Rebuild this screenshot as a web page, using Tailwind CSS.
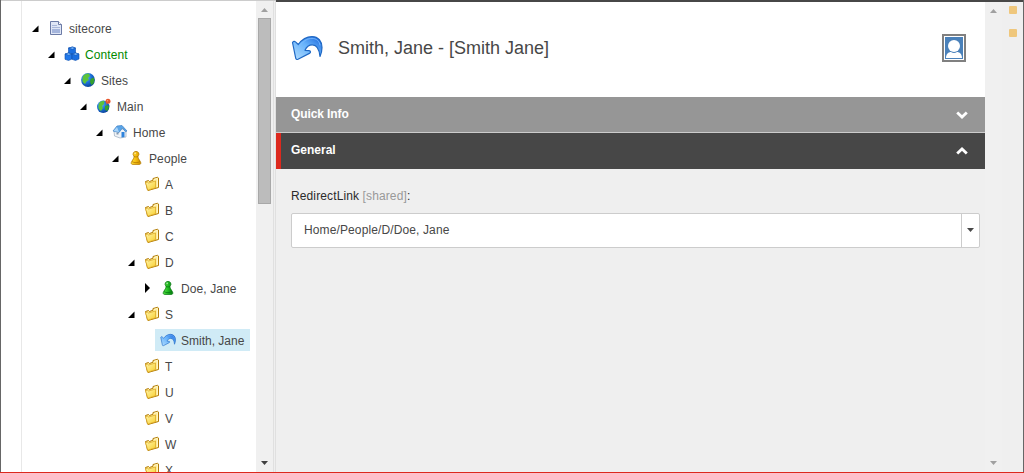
<!DOCTYPE html>
<html lang="en">
<head>
<meta charset="utf-8">
<title>Content Editor</title>
<script src="https://cdn.jsdelivr.net/npm/@tailwindcss/browser@4"></script>
</head>
<body class="h-[473px] w-[1024px] overflow-hidden bg-[#efefef] font-['Liberation_Sans',Arial,sans-serif] text-[12px] text-[#474747]">
<svg class="absolute size-0">
  <defs>
    <linearGradient id="gold" x1="0" y1="0" x2="1" y2="1"><stop offset="0" stop-color="#fff6b0"/><stop offset="1" stop-color="#f8cf2c"/></linearGradient>
    <linearGradient id="pawnY" x1="0" x2="1"><stop offset="0" stop-color="#ffe23c"/><stop offset=".5" stop-color="#f5bd10"/><stop offset="1" stop-color="#c98a00"/></linearGradient>
    <linearGradient id="pawnG" x1="0" x2="1"><stop offset="0" stop-color="#5fe84a"/><stop offset=".5" stop-color="#22bb22"/><stop offset="1" stop-color="#067a10"/></linearGradient>
    <linearGradient id="undo" x1="1" y1="0" x2="0" y2="1"><stop offset="0" stop-color="#1560d8"/><stop offset=".45" stop-color="#66b2fb"/><stop offset="1" stop-color="#b4defe"/></linearGradient>
    <radialGradient id="sea" cx=".35" cy=".3" r=".8"><stop offset="0" stop-color="#69b8ff"/><stop offset=".5" stop-color="#1b6fd8"/><stop offset="1" stop-color="#083a8c"/></radialGradient>
  </defs>
  <symbol id="open" viewBox="0 0 16 16"><path d="M6.500 5.500V12H0z" fill="#000"/></symbol>
  <symbol id="closed" viewBox="0 0 16 16"><path d="M1 3l5 5-5 5z" fill="#000"/></symbol>
  <symbol id="doc" viewBox="0 0 16 16"><path d="M2.500 1.500h8l3 3v10h-11z" fill="#dfe6f6" stroke="#6c7ba6"/><path d="M10.500 1.500v3h3" fill="#fff" stroke="#6c7ba6"/><path d="M4 5.500h5M4 7.500h8" stroke="#a9b7da"/><path d="M4 9h8v4H4z" fill="#a5b5dc"/></symbol>
  <symbol id="cubes" viewBox="0 0 16 16"><g stroke="#0b4fb0" stroke-width=".6"><path d="M4.500 2l4-1 3 1v5l-3 1.500-4-1z" fill="#1b6fe0"/><path d="M4.500 2l4-1 3 1-3 1.300z" fill="#78baff"/><path d="M1 8l3.500-1L8 8v5l-3.500 1.500L1 13.300z" fill="#2279ea"/><path d="M1 8l3.500-1L8 8l-3.200 1.200z" fill="#8bc6ff"/><path d="M8 8l3.500-1L15 8v5l-3.500 1.500L8 13.300z" fill="#1b6fe0"/><path d="M8 8l3.500-1L15 8l-3.200 1.200z" fill="#8bc6ff"/></g></symbol>
  <symbol id="globe" viewBox="0 0 16 16"><circle cx="8" cy="8" r="6.900" fill="url(#sea)"/><path d="M3 4c2-2.500 5-3 6-2.300L10 4 8 6l1 2-2 1-2 3C3 11 2 9 2.500 7z" fill="#5cc33c"/><path d="M10.500 7l3-1.500 1 2.500-1 3.500-2 1.500-1.500-3z" fill="#35a12e"/></symbol>
  <symbol id="main" viewBox="0 0 16 16"><circle cx="7.200" cy="8.800" r="6.200" fill="url(#sea)"/><path d="M3 5.500c1-2 4-3 5.500-2.500L8 6 6 8l1 2-2 3C3 12 2 10 2.500 8z" fill="#5cc33c"/><path d="M9 8l3-1 1 2-1.500 4L9 12z" fill="#35a12e"/><path d="M10 7l2-4" stroke="#777"/><circle cx="12" cy="3.300" r="2.500" fill="#e8552b"/><circle cx="11.500" cy="2.700" r=".8" fill="#ff9d77"/></symbol>
  <symbol id="home" viewBox="0 0 16 16"><path d="M2 7l3-4 8 3 1 1v6l-6 1-5.500-2z" fill="#f0f3f7" stroke="#9aaabd" stroke-width=".7"/><path d="M1 7l4-5 5-.500L15 7l-1.500.800L10.500 4 7 8.500z" fill="#5ba5e8" stroke="#3c80c4" stroke-width=".7"/><path d="M1.500 7L5 3l2 5z" fill="#a9d4f8"/><path d="M9.500 8h3v5l-3 .500z" fill="#2e83dc"/><path d="M4.500 8.500h2v2h-2z" fill="#8498ad"/></symbol>
  <symbol id="pawn" viewBox="0 0 16 16"><path d="M8 1.400a2.700 2.700 0 0 1 2 4.700c-.2 2 .8 3 2.300 5.400.9 1.500.6 2.900-1 2.900H4.700c-1.600 0-1.900-1.400-1-2.900C5.200 9.100 6.200 8.100 6 6.100a2.700 2.700 0 0 1 2-4.700z"/><path d="M6 6.300c1 .9 3 .9 4 0M4 11.600c2 1.400 6 1.400 8 0" fill="none"/><circle cx="7.200" cy="3.300" r=".9" fill="#fff" fill-opacity=".55" stroke="none"/></symbol>
  <symbol id="folder" viewBox="0 0 16 16"><path d="M1.500 5.500l3-1 1 1 3.500-1.300V2.500l4.500-1.200 1 .7v9.500L4 14.500 3.500 14z" fill="#ffe98a" stroke="#b07a08"/><path d="M10.300 4.500V3.300l3-.800v8.500" fill="none" stroke="#fff8d0"/><path d="M1.500 6.500l2-.300 1 .8 7-2v6.800l-7.700 2.400z" fill="url(#gold)" stroke="#d9a21c" stroke-width=".7"/></symbol>
  <symbol id="back" viewBox="0 0 32 26"><path d="M1.500 7.500c.8-1.300 2-1.600 3-.6L7.300 9.500C11 4.300 16 1.600 21 1.600c6.300 0 10 4.700 10 11 0 3-.7 6-2 8.900-.7-7.500-3-11.700-7.700-11.700-3.300 0-6 2.300-7.300 5.500l4 .4c1.800.3 2 1.900.4 2.700L7 24.300c-1.300.5-2 0-2.300-1.200z" fill="url(#undo)" stroke="#1f68c4" stroke-width="1.200" stroke-linejoin="round"/><path d="M9 10.500C13 5.300 17 3.400 21 3.400c4.500 0 7.500 2.800 8 7" fill="none" stroke="#7dbcff" stroke-width=".8"/></symbol>
</svg>
<div class="flex h-[472px] w-full border-x border-[#666]">
  <aside class="flex w-[275px] shrink-0 overflow-hidden border-t border-t-[#ccc] bg-white">
    <div class="w-[21px] shrink-0 border-r border-[#e8e8e8]"></div>
    <ul class="w-[234px] pt-[14px] pl-[10px] leading-[20px] tracking-[0.1px] [&>li]:flex [&>li]:h-[26px] [&>li]:items-center [&_span]:whitespace-pre [&_svg]:size-4 [&_svg]:shrink-0 [&_span]:ml-[5px] [&_span]:pt-[2px]">
      <li><svg><use href="#open"/></svg><svg><use href="#doc"/></svg><span>sitecore</span></li>
      <li class="pl-[16px]"><svg><use href="#open"/></svg><svg><use href="#cubes"/></svg><span class="text-[#008a00]">Content</span></li>
      <li class="pl-[32px]"><svg><use href="#open"/></svg><svg><use href="#globe"/></svg><span>Sites</span></li>
      <li class="pl-[48px]"><svg><use href="#open"/></svg><svg><use href="#main"/></svg><span>Main</span></li>
      <li class="pl-[64px]"><svg><use href="#open"/></svg><svg><use href="#home"/></svg><span>Home</span></li>
      <li class="pl-[80px]"><svg><use href="#open"/></svg><svg fill="url(#pawnY)" stroke="#b47a00" stroke-width=".8"><use href="#pawn"/></svg><span>People</span></li>
      <li class="pl-[112px]"><svg><use href="#folder"/></svg><span>A</span></li>
      <li class="pl-[112px]"><svg><use href="#folder"/></svg><span>B</span></li>
      <li class="pl-[112px]"><svg><use href="#folder"/></svg><span>C</span></li>
      <li class="pl-[96px]"><svg><use href="#open"/></svg><svg><use href="#folder"/></svg><span>D</span></li>
      <li class="pl-[112px]"><svg><use href="#closed"/></svg><svg fill="url(#pawnG)" stroke="#087a12" stroke-width=".8"><use href="#pawn"/></svg><span>Doe, Jane</span></li>
      <li class="pl-[96px]"><svg><use href="#open"/></svg><svg><use href="#folder"/></svg><span>S</span></li>
      <li class="pl-[123px]"><div class="flex h-[22px] w-[95px] items-center bg-[#d0ebf6] pl-[5px] tracking-normal"><svg><use href="#back"/></svg><span>Smith, Jane</span></div></li>
      <li class="pl-[112px]"><svg><use href="#folder"/></svg><span>T</span></li>
      <li class="pl-[112px]"><svg><use href="#folder"/></svg><span>U</span></li>
      <li class="pl-[112px]"><svg><use href="#folder"/></svg><span>V</span></li>
      <li class="pl-[112px]"><svg><use href="#folder"/></svg><span>W</span></li>
      <li class="pl-[112px]"><svg><use href="#folder"/></svg><span>X</span></li>
    </ul>
    <div class="flex w-[17px] shrink-0 flex-col items-center bg-[#f0f0f0]">
      <svg class="mt-[7px] h-[4px] w-[7px] shrink-0" viewBox="0 0 7 4"><path d="M0 4L3.500 0 7 4z" fill="#a0a0a0"/></svg>
      <div class="mt-[6px] h-[186px] w-[13px] shrink-0 border border-[#a8a8a8] bg-[#bcbcbc]"></div>
      <svg class="mt-auto mb-[7px] h-[4px] w-[7px] shrink-0" viewBox="0 0 7 4"><path d="M0 0h7L3.500 4z" fill="#404040"/></svg>
    </div>
    <div class="w-[3px] shrink-0 border-x border-[#e0e0e0] bg-[#efefef]"></div>
  </aside>
  <main class="flex min-w-0 flex-1 border-t-2 border-[#474747]">
    <div class="flex w-[709px] shrink-0 flex-col">
      <header class="flex h-[95px] items-start bg-white pl-[15px]">
        <svg class="mt-[33px] h-[26px] w-[32px]"><use href="#back"/></svg>
        <h1 class="mt-[34px] ml-[15px] text-[18px] leading-[24px] whitespace-pre">Smith, Jane - [Smith Jane]</h1>
        <svg class="mt-[32px] mr-[19px] ml-auto h-[28px] w-[24px]" viewBox="0 0 24 28"><path d="M0 0h24v28H0z" fill="#808080"/><path d="M2 2h20v24H2z" fill="#fff"/><path d="M3 3h18v22H3z" fill="#4a81ba"/><circle cx="12" cy="12" r="6" fill="#fff"/><path d="M4 24c0-4 2.500-6 5-6 2 1.300 4 1.300 6 0 2.500 0 5 2 5 6z" fill="#fff"/></svg>
      </header>
      <section class="flex h-[36px] justify-between border-b border-[#ccc] bg-[#969696] pr-[17px] pl-[15px] font-bold tracking-[-0.1px] text-white">
        <h2 class="mt-[9px] leading-4">Quick Info</h2>
        <svg class="mt-[14px] h-[8px] w-[12px]" viewBox="0 0 12 8"><path d="M1.200 1.400L6 6l4.800-4.600" fill="none" stroke="#fff" stroke-width="2.800"/></svg>
      </section>
      <section class="flex h-[36px] justify-between border-l-5 border-[#dc291e] bg-[#474747] pr-[17px] pl-[10px] font-bold text-white">
        <h2 class="mt-[9px] leading-4">General</h2>
        <svg class="mt-[14px] h-[8px] w-[12px]" viewBox="0 0 12 8"><path d="M1.200 6.600L6 2l4.800 4.600" fill="none" stroke="#fff" stroke-width="2.800"/></svg>
      </section>
      <div class="pt-[19px] pr-[5px] pl-[15px] tracking-[0.12px]">
        <label class="block leading-4 text-[#2b2b2b]">RedirectLink <span class="text-[#999]">[shared]</span>:</label>
        <div class="mt-[9px] flex h-[35px] rounded-[2px] border border-[#ccc] bg-white">
          <div class="flex-1 pl-[12px] leading-[33px]">Home/People/D/Doe, Jane</div>
          <div class="flex w-[18px] items-start justify-center border-l border-[#ccc] pt-[14px]"><svg class="h-[4px] w-[7px]" viewBox="0 0 7 4"><path d="M0 0h7L3.500 4z" fill="#474747"/></svg></div>
        </div>
      </div>
    </div>
    <div class="flex w-[17px] flex-col items-center justify-between bg-[#f0f0f0] pt-[7px] pb-[7px]">
      <svg class="h-[4px] w-[7px]" viewBox="0 0 7 4"><path d="M0 4L3.500 0 7 4z" fill="#a0a0a0"/></svg>
      <svg class="h-[4px] w-[7px]" viewBox="0 0 7 4"><path d="M0 0h7L3.500 4z" fill="#a0a0a0"/></svg>
    </div>
    <div class="flex flex-1 flex-col gap-[15px] pt-[4px] pl-[7px]">
      <div class="size-[8px] rounded-[1px] bg-[#efc77c]"></div>
      <div class="size-[8px] rounded-[1px] bg-[#efc77c]"></div>
    </div>
  </main>
</div>
<div class="h-px bg-[#dc291e]"></div>
</body>
</html>
